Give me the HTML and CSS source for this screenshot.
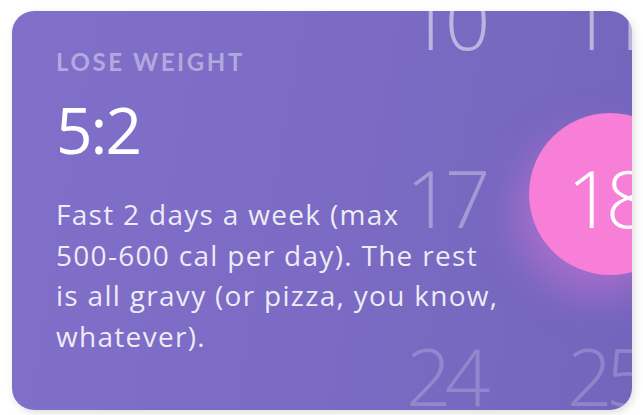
FILE: index.html
```html
<!DOCTYPE html>
<html lang="en">
<head>
<meta charset="utf-8">
<title>Lose weight 5:2</title>
<link rel="stylesheet" href="styles.css">
</head>
<body>
<main class="page">
  <article class="card">
    <div class="calendar" aria-hidden="true">
      <span class="day row1">10</span>
      <span class="day row1">11</span>
      <span class="day row2">17</span>
      <span class="day row2 selected">18</span>
      <span class="day row3">24</span>
      <span class="day row3">25</span>
    </div>
    <div class="content">
      <p class="eyebrow">LOSE WEIGHT</p>
      <h1 class="title">5:2</h1>
      <p class="desc">Fast 2 days a week (max<br>500-600 cal per day). The rest<br>is all gravy (or pizza, you know,<br>whatever).</p>
    </div>
  </article>
</main>
</body>
</html>
```

FILE: styles.css
```css
* { box-sizing: border-box; }

html, body {
  margin: 0;
  padding: 0;
  background: #ffffff;
}

.page {
  padding: 11px 11px 5px 12px;
}

.card {
  position: relative;
  width: 620px;
  height: 399px;
  border-radius: 22px;
  overflow: hidden;
  background: linear-gradient(100deg, #8170ca 0%, #7b6bc4 50%, #7365bc 100%);
  box-shadow: 2px 3px 8px rgba(0, 0, 0, 0.13);
  font-family: "Open Sans", "Noto Sans", sans-serif;
}

.calendar {
  position: absolute;
  left: 394px;
  top: -32px;
  display: grid;
  grid-template-columns: repeat(2, 161px);
  grid-auto-rows: 178px;
  z-index: 0;
}

.day {
  position: relative;
  font-size: 80px;
  line-height: 80px;
  font-weight: 300;
  letter-spacing: -7px;
  color: rgba(255, 255, 255, 0.4);
  filter: blur(0.6px);
}

.day.row1 { color: rgba(255, 255, 255, 0.5); }
.day.row2 { color: rgba(255, 255, 255, 0.33); }
.day.row3 { color: rgba(255, 255, 255, 0.2); }

.day.selected {
  color: #ffffff;
  filter: none;
}

.day.selected::before {
  content: "";
  position: absolute;
  left: -38px;
  top: -44px;
  width: 162px;
  height: 162px;
  border-radius: 50%;
  background: #f77fd7;
  box-shadow: -12px 20px 40px rgba(222, 118, 222, 0.5);
  z-index: -1;
}

.content {
  position: relative;
  z-index: 1;
  padding: 36px 0 0 44px;
}

.eyebrow {
  margin: 0;
  font-family: "Lato", "Open Sans", sans-serif;
  font-size: 24px;
  line-height: 30px;
  font-weight: 700;
  letter-spacing: 2.6px;
  color: rgba(255, 255, 255, 0.42);
}

.title {
  margin: 21px 0 0;
  font-size: 64px;
  line-height: 64px;
  font-weight: 400;
  letter-spacing: -2px;
  color: #ffffff;
}

.desc {
  margin: 32px 0 0;
  font-size: 28px;
  line-height: 40.5px;
  font-weight: 400;
  letter-spacing: 1.3px;
  color: rgba(255, 255, 255, 0.88);
}
```
